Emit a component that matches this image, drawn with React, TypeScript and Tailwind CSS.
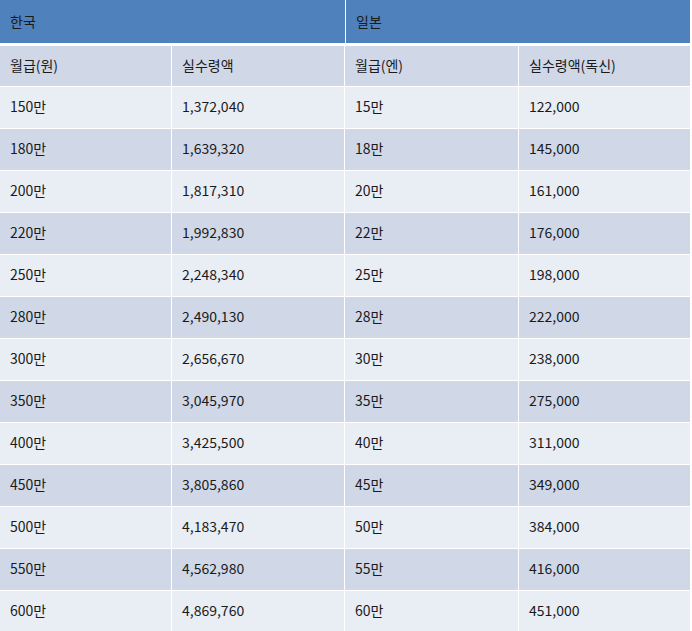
const rows = [
  ['150만', '1,372,040', '15만', '122,000'],
  ['180만', '1,639,320', '18만', '145,000'],
  ['200만', '1,817,310', '20만', '161,000'],
  ['220만', '1,992,830', '22만', '176,000'],
  ['250만', '2,248,340', '25만', '198,000'],
  ['280만', '2,490,130', '28만', '222,000'],
  ['300만', '2,656,670', '30만', '238,000'],
  ['350만', '3,045,970', '35만', '275,000'],
  ['400만', '3,425,500', '40만', '311,000'],
  ['450만', '3,805,860', '45만', '349,000'],
  ['500만', '4,183,470', '50만', '384,000'],
  ['550만', '4,562,980', '55만', '416,000'],
  ['600만', '4,869,760', '60만', '451,000'],
]

const heads = ['월급(원)', '실수령액', '월급(엔)', '실수령액(독신)']

export default function App() {
  return (
    <div
      className="w-[692px] h-[631px] overflow-hidden bg-white text-[14px] text-[#1a1a1a]"
      style={{ fontFamily: '"Malgun Gothic", "Noto Sans CJK KR", "Noto Sans", sans-serif' }}
    >
      <div className="w-[690px]">
        {/* Country header */}
        <div className="grid grid-cols-[345px_344px] gap-x-px h-[43px] bg-white">
          <div className="bg-[#4f81bd] flex items-center pl-[10px] pb-px">한국</div>
          <div className="bg-[#4f81bd] flex items-center pl-[10px] pb-px">일본</div>
        </div>

        <div className="mt-[3px] grid grid-cols-[171px_172px_173px_171px] gap-x-[1px] gap-y-px bg-white">
          {heads.map((h, i) => (
            <div key={i} className="h-[40px] bg-[#d0d8e8] flex items-center pl-[10px] pb-px">
              {h}
            </div>
          ))}
          {rows.map((r, ri) =>
            r.map((c, ci) => (
              <div
                key={ri + '-' + ci}
                className={
                  'h-[41px] flex items-center pl-[10px] pb-[2px] ' +
                  (ri % 2 === 0 ? 'bg-[#e9edf4]' : 'bg-[#d0d8e8]')
                }
              >
                {c}
              </div>
            ))
          )}
        </div>
      </div>
    </div>
  )
}
